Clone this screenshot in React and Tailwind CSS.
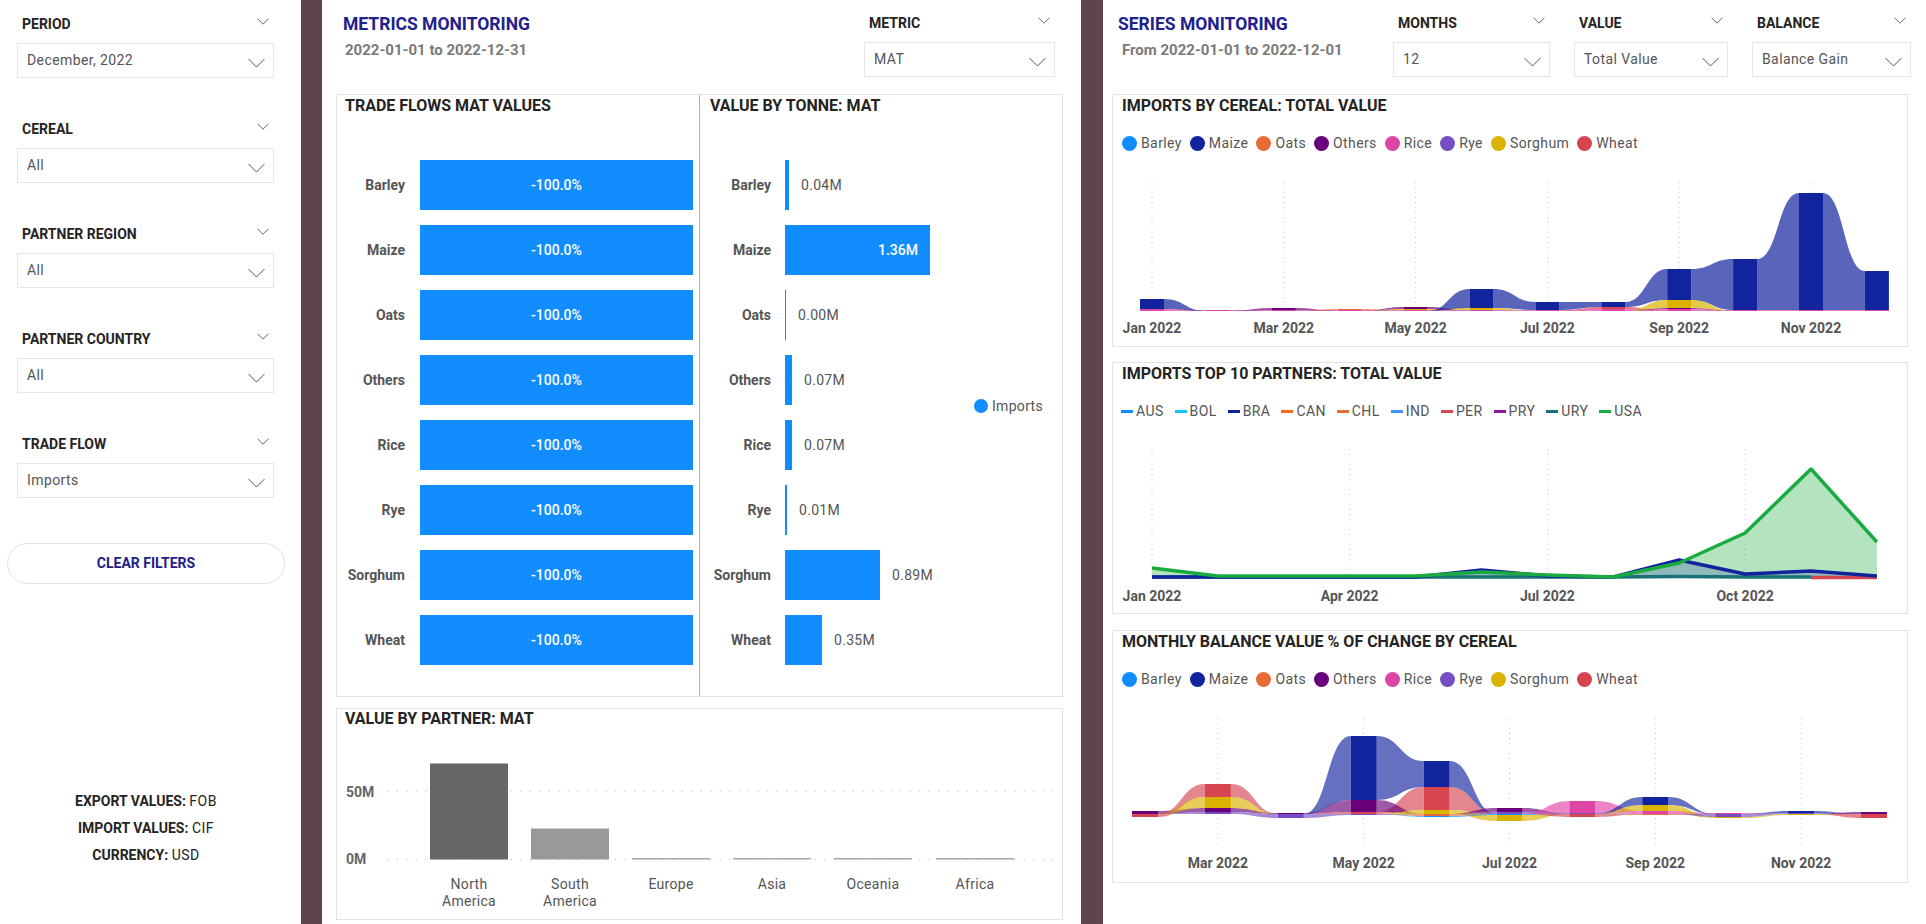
import React from 'react';

const FONT = "font-[family-name:Roboto,'Liberation_Sans',Arial,sans-serif]";

const C = {
  Barley: '#118DFF',
  Maize: '#12239E',
  Oats: '#E66C37',
  Others: '#6B007B',
  Rice: '#E044A7',
  Rye: '#744EC2',
  Sorghum: '#D9B300',
  Wheat: '#D64550',
};

const DOTS = [
  { name: 'Barley', bg: 'bg-[#118DFF]' },
  { name: 'Maize', bg: 'bg-[#12239E]' },
  { name: 'Oats', bg: 'bg-[#E66C37]' },
  { name: 'Others', bg: 'bg-[#6B007B]' },
  { name: 'Rice', bg: 'bg-[#E044A7]' },
  { name: 'Rye', bg: 'bg-[#744EC2]' },
  { name: 'Sorghum', bg: 'bg-[#D9B300]' },
  { name: 'Wheat', bg: 'bg-[#D64550]' },
];

const PARTNERS = [
  { name: 'AUS', bg: 'bg-[#118DFF]' },
  { name: 'BOL', bg: 'bg-[#15C6F4]' },
  { name: 'BRA', bg: 'bg-[#12239E]' },
  { name: 'CAN', bg: 'bg-[#F26B1D]' },
  { name: 'CHL', bg: 'bg-[#E66C37]' },
  { name: 'IND', bg: 'bg-[#4092FF]' },
  { name: 'PER', bg: 'bg-[#D64550]' },
  { name: 'PRY', bg: 'bg-[#8A1A9B]' },
  { name: 'URY', bg: 'bg-[#197278]' },
  { name: 'USA', bg: 'bg-[#1AAB40]' },
];

const HeadChevron = () => (
  <svg width="12" height="7" viewBox="0 0 12 7" className="shrink-0 mt-[4px]">
    <polyline points="0.5,0.7 6,6.2 11.5,0.7" fill="none" stroke="#666" strokeWidth="1" />
  </svg>
);

const BoxChevron = () => (
  <svg width="17" height="10" viewBox="0 0 17 10" className="shrink-0 mt-[5px]">
    <polyline points="0.5,1 8.5,9 16.5,1" fill="none" stroke="#555" strokeWidth="1" />
  </svg>
);

function Slicer({ label, value }) {
  return (
    <div className="w-full">
      <div className="flex items-start justify-between h-[20px] pl-[5px] pr-[5px]">
        <span className="text-[14px] leading-[20px] font-bold text-[#252423]">{label}</span>
        <HeadChevron />
      </div>
      <div className="mt-[9px] h-[35px] border border-[#e6e6e6] flex items-center justify-between pl-[9px] pr-[8px]">
        <span className="text-[14px] text-[#555] tracking-[0.4px]">{value}</span>
        <BoxChevron />
      </div>
    </div>
  );
}

function Sidebar() {
  return (
    <div className="w-[301px] h-full bg-white pt-[14px] pl-[17px] flex flex-col shrink-0">
      <div className="w-[257px] flex flex-col gap-[41px]">
        <Slicer label="PERIOD" value="December, 2022" />
        <Slicer label="CEREAL" value="All" />
        <Slicer label="PARTNER REGION" value="All" />
        <Slicer label="PARTNER COUNTRY" value="All" />
        <Slicer label="TRADE FLOW" value="Imports" />
      </div>
      <button className="mt-[45px] -ml-[10px] w-[278px] h-[41px] rounded-full border border-[#e2e2e2] bg-white text-[14px] font-bold text-[#1e2088]">
        CLEAR FILTERS
      </button>
      <div className="mt-[204px] -ml-[17px] w-[292px] text-center text-[14px] leading-[27px] text-[#252423]">
        <div>
          <span className="font-bold">EXPORT VALUES:</span> <span className="tracking-[0.5px]">FOB</span>
        </div>
        <div>
          <span className="font-bold">IMPORT VALUES:</span> <span className="tracking-[0.5px]">CIF</span>
        </div>
        <div>
          <span className="font-bold">CURRENCY:</span> <span className="tracking-[0.5px]">USD</span>
        </div>
      </div>
    </div>
  );
}

const CEREALS = ['Barley', 'Maize', 'Oats', 'Others', 'Rice', 'Rye', 'Sorghum', 'Wheat'];
const TONNE = [
  ['0.04M', 4],
  ['1.36M', 145],
  ['0.00M', 1],
  ['0.07M', 7],
  ['0.07M', 7],
  ['0.01M', 2],
  ['0.89M', 95],
  ['0.35M', 37],
];

function PartnerChart() {
  const bars = [
    { x: 93, h: 96, fill: '#666666', l1: 'North', l2: 'America' },
    { x: 194, h: 31, fill: '#999999', l1: 'South', l2: 'America' },
    { x: 295, h: 1.5, fill: '#aaaaaa', l1: 'Europe' },
    { x: 396, h: 1.5, fill: '#aaaaaa', l1: 'Asia' },
    { x: 497, h: 1.5, fill: '#aaaaaa', l1: 'Oceania' },
    { x: 599, h: 1.5, fill: '#aaaaaa', l1: 'Africa' },
  ];
  return (
    <svg width="725" height="190" className="block">
      <line x1="50" y1="62" x2="721" y2="62" stroke="#c6c6c6" strokeWidth="1" strokeDasharray="1.5 8" />
      <line x1="50" y1="130.5" x2="721" y2="130.5" stroke="#c6c6c6" strokeWidth="1" strokeDasharray="1.5 8" />
      <text x="9" y="64" fontSize="14" fontWeight="700" fill="#666" dominantBaseline="middle">50M</text>
      <text x="9" y="131" fontSize="14" fontWeight="700" fill="#666" dominantBaseline="middle">0M</text>
      {bars.map((b) => (
        <g key={b.l1}>
          <rect x={b.x} y={130.5 - b.h} width="78" height={b.h} fill={b.fill} />
          <text x={b.x + 39} y="156" fontSize="14" fill="#555" textAnchor="middle" dominantBaseline="middle" letterSpacing="0.3">
            {b.l1}
          </text>
          {b.l2 && (
            <text x={b.x + 39} y="173" fontSize="14" fill="#555" textAnchor="middle" dominantBaseline="middle" letterSpacing="0.3">
              {b.l2}
            </text>
          )}
        </g>
      ))}
    </svg>
  );
}

function Middle() {
  return (
    <div className="ml-[21px] w-[759px] h-full bg-white flex flex-col shrink-0">
      <div className="h-[94px] flex shrink-0">
        <div className="flex-1 pl-[21px] pt-[13px]">
          <div className="text-[17.5px] leading-[22px] font-bold text-[#21218d]">METRICS MONITORING</div>
          <div className="mt-[6px] pl-[2px] text-[15px] leading-[18px] font-bold text-[#7a7a7a]">2022-01-01 to 2022-12-31</div>
        </div>
        <div className="w-[191px] mr-[26px] pt-[13px]">
          <Slicer label="METRIC" value="MAT" />
        </div>
      </div>

      <div className="ml-[14px] w-[727px] h-[603px] border border-[#e3e3e3] flex shrink-0">
        <div className="w-[362px] flex flex-col">
          <div className="pl-[8px] text-[16px] leading-[22px] font-bold text-[#252423]">TRADE FLOWS MAT VALUES</div>
          <div className="mt-[43px] flex flex-col gap-[15px]">
            {CEREALS.map((c) => (
              <div key={c} className="flex items-center h-[50px]">
                <div className="w-[68px] text-right text-[14px] font-bold text-[#555]">{c}</div>
                <div className="ml-[15px] w-[273px] h-full bg-[#118dff] flex items-center justify-center text-white text-[14px] font-medium">
                  -100.0%
                </div>
              </div>
            ))}
          </div>
        </div>
        <div className="flex-1 border-l border-[#b3b3b3] flex flex-col">
          <div className="pl-[10px] text-[16px] leading-[22px] font-bold text-[#252423]">VALUE BY TONNE: MAT</div>
          <div className="mt-[43px] flex">
            <div className="w-[274px] flex flex-col gap-[15px]">
              {CEREALS.map((c, i) => {
                const [lbl, w] = TONNE[i];
                const inside = w > 120;
                return (
                  <div key={c} className="flex items-center h-[50px]">
                    <div className="w-[71px] text-right text-[14px] font-bold text-[#555]">{c}</div>
                    {inside ? (
                      <div
                        className="ml-[14px] h-full bg-[#118dff] flex items-center justify-end pr-[12px] text-white text-[14px] font-medium"
                        style={{ width: w }}
                      >
                        {lbl}
                      </div>
                    ) : (
                      <>
                        <div className="ml-[14px] h-full bg-[#118dff] shrink-0" style={{ width: w }} />
                        <div className="ml-[12px] text-[14px] text-[#555] tracking-[0.3px]">{lbl}</div>
                      </>
                    )}
                  </div>
                );
              })}
            </div>
            <div className="self-center mb-[13px] flex items-center gap-[4px]">
              <span className="w-[14px] h-[14px] rounded-full bg-[#118dff]" />
              <span className="text-[14px] text-[#555] tracking-[0.3px]">Imports</span>
            </div>
          </div>
        </div>
      </div>

      <div className="ml-[14px] mt-[11px] w-[727px] h-[212px] border border-[#e3e3e3] flex flex-col shrink-0">
        <div className="pl-[8px] text-[16px] leading-[20px] font-bold text-[#252423]">VALUE BY PARTNER: MAT</div>
        <PartnerChart />
      </div>
    </div>
  );
}

function Ribbon({ xs, base, bw, cols, op = 0.7 }) {
  const segs = cols.map((c) => {
    const m = {};
    let y = base;
    (c.p || []).forEach(([s, h]) => {
      m[s] = [y - h, y];
      y -= h;
    });
    y = base;
    (c.n || []).forEach(([s, h]) => {
      m[s] = [y, y + h];
      y += h;
    });
    return m;
  });
  const ribbons = [];
  for (let i = 0; i < cols.length - 1; i++) {
    const keys = new Set([...Object.keys(segs[i]), ...Object.keys(segs[i + 1])]);
    keys.forEach((s) => {
      const a = segs[i][s] || [base, base];
      const b = segs[i + 1][s] || [base, base];
      const x0 = xs[i] + bw / 2;
      const x1 = xs[i + 1] - bw / 2;
      const xm = (x0 + x1) / 2;
      ribbons.push(
        <path
          key={`r${i}${s}`}
          d={`M${x0},${a[0]} C${xm},${a[0]} ${xm},${b[0]} ${x1},${b[0]} L${x1},${b[1]} C${xm},${b[1]} ${xm},${a[1]} ${x0},${a[1]} Z`}
          fill={C[s]}
          fillOpacity={op}
        />
      );
    });
  }
  const bars = [];
  segs.forEach((m, i) =>
    Object.entries(m).forEach(([s, [t, b]]) =>
      bars.push(<rect key={`b${i}${s}`} x={xs[i] - bw / 2} y={t} width={bw} height={b - t} fill={C[s]} />)
    )
  );
  return (
    <g>
      {ribbons}
      {bars}
    </g>
  );
}

function Grid({ xs, y1, y2 }) {
  return (
    <g>
      {xs.map((x, i) => (
        <line key={i} x1={x} y1={y1} x2={x} y2={y2} stroke="#c8c8c8" strokeWidth="1" strokeDasharray="1 4" />
      ))}
    </g>
  );
}

function Labels({ items, y }) {
  return (
    <g>
      {items.map(([x, t]) => (
        <text key={t} x={x} y={y} fontSize="14" fontWeight="700" fill="#555" textAnchor="middle" dominantBaseline="middle">
          {t}
        </text>
      ))}
    </g>
  );
}

const MONTHS_A = Array.from({ length: 12 }, (_, m) => 39 + 65.9 * m);

function ChartA() {
  const xs = MONTHS_A;
  const cols = [
    { p: [['Rice', 2], ['Maize', 10]] },
    { p: [['Rice', 1]] },
    { p: [['Rice', 1], ['Others', 2]] },
    { p: [['Rice', 1], ['Oats', 1]] },
    { p: [['Rice', 1], ['Sorghum', 1], ['Others', 2]] },
    { p: [['Rice', 1], ['Sorghum', 2], ['Maize', 19]] },
    { p: [['Rice', 1], ['Maize', 8]] },
    { p: [['Rice', 2], ['Wheat', 2], ['Maize', 5]] },
    { p: [['Rice', 2], ['Others', 1], ['Sorghum', 8], ['Maize', 31]] },
    { p: [['Rice', 1], ['Maize', 51]] },
    { p: [['Rice', 1], ['Maize', 117]] },
    { p: [['Rice', 1], ['Maize', 39]] },
  ];
  const gx = [0, 2, 4, 6, 8, 10].map((i) => xs[i]);
  const names = ['Jan 2022', 'Mar 2022', 'May 2022', 'Jul 2022', 'Sep 2022', 'Nov 2022'];
  return (
    <svg width="794" height="192" className="block">
      <Grid xs={gx} y1={28} y2={157} />
      <Ribbon xs={xs} base={157} bw={24} cols={cols} op={0.7} />
      <Labels items={gx.map((x, i) => [x, names[i]])} y={175} />
    </svg>
  );
}

function ChartB() {
  const xs = MONTHS_A;
  const base = 156;
  const USA = [146, 154, 154, 154, 154, 150, 153, 155, 141, 111, 47, 120];
  const BRA = [155, 155, 155, 155, 155, 148, 154, 155, 138, 152, 149, 154];
  const URY = [155, 155, 155, 155, 155, 155, 155, 155, 154.5, 155, 155];
  const pts = (arr) => arr.map((y, i) => `${xs[i]},${y}`).join(' ');
  const area = (arr) => `${xs[0]},${base} ${pts(arr)} ${xs[arr.length - 1]},${base}`;
  const gx = [0, 3, 6, 9].map((i) => xs[i]);
  const names = ['Jan 2022', 'Apr 2022', 'Jul 2022', 'Oct 2022'];
  return (
    <svg width="794" height="191" className="block">
      <Grid xs={gx} y1={27} y2={156} />
      <polygon points={area(USA)} fill="#1AAB40" fillOpacity="0.33" />
      <polygon points={area(BRA)} fill="#12239E" fillOpacity="0.22" />
      <polyline points={pts(URY)} fill="none" stroke="#197278" strokeWidth="3.5" />
      <polyline points={`${xs[10]},155.5 ${xs[11]},155.5`} fill="none" stroke="#D64550" strokeWidth="3.5" />
      <polyline points={pts(BRA)} fill="none" stroke="#12239E" strokeWidth="3.5" strokeLinejoin="round" />
      <polyline points={pts(USA)} fill="none" stroke="#1AAB40" strokeWidth="3.5" strokeLinejoin="round" />
      <Labels items={gx.map((x, i) => [x, names[i]])} y={175} />
    </svg>
  );
}

function ChartC() {
  const xs = Array.from({ length: 11 }, (_, i) => 32 + 72.9 * i);
  const cols = [
    { p: [['Others', 3]], n: [['Wheat', 3]] },
    { p: [['Rye', 2], ['Others', 4], ['Sorghum', 11], ['Wheat', 13]] },
    { p: [['Others', 1]], n: [['Rye', 4]] },
    { p: [['Wheat', 2], ['Others', 12], ['Maize', 64]], n: [['Rye', 1]] },
    { p: [['Sorghum', 4], ['Wheat', 23], ['Maize', 26]], n: [['Oats', 2], ['Barley', 1]] },
    { p: [['Rye', 2], ['Others', 4]], n: [['Barley', 1], ['Sorghum', 6]] },
    { p: [['Rye', 1], ['Rice', 12]], n: [['Wheat', 3]] },
    { p: [['Rice', 3], ['Sorghum', 6], ['Maize', 8]], n: [['Oats', 1]] },
    { p: [['Rice', 1]], n: [['Rye', 3], ['Sorghum', 1]] },
    { p: [['Rye', 1], ['Maize', 2]], n: [['Sorghum', 1]] },
    { p: [['Others', 2]], n: [['Wheat', 4]] },
  ];
  const gx = [1, 3, 5, 7, 9].map((i) => xs[i]);
  const names = ['Mar 2022', 'May 2022', 'Jul 2022', 'Sep 2022', 'Nov 2022'];
  return (
    <svg width="794" height="192" className="block">
      <Grid xs={gx} y1={28} y2={158} />
      <Ribbon xs={xs} base={124} bw={26} cols={cols} op={0.65} />
      <Labels items={gx.map((x, i) => [x, names[i]])} y={174} />
    </svg>
  );
}

function DotLegend() {
  return (
    <div className="mt-[15px] h-[22px] pl-[9px] flex items-center gap-[8px]">
      {DOTS.map((d) => (
        <div key={d.name} className="flex items-center gap-[4px]">
          <span className={`w-[15px] h-[15px] rounded-full ${d.bg}`} />
          <span className="text-[14px] text-[#555] tracking-[0.4px]">{d.name}</span>
        </div>
      ))}
    </div>
  );
}

function LineLegend() {
  return (
    <div className="mt-[15px] h-[22px] pl-[8px] flex items-center gap-[11px]">
      {PARTNERS.map((d) => (
        <div key={d.name} className="flex items-center gap-[3px]">
          <span className={`w-[12px] h-[3px] ${d.bg}`} />
          <span className="text-[14px] text-[#555] tracking-[0.4px]">{d.name}</span>
        </div>
      ))}
    </div>
  );
}

function CardTitle({ children }) {
  return <div className="pl-[9px] text-[16px] leading-[22px] font-bold text-[#252423]">{children}</div>;
}

function Right() {
  return (
    <div className="ml-[22px] w-[823px] h-full bg-white flex flex-col shrink-0">
      <div className="h-[94px] flex shrink-0">
        <div className="w-[290px] pl-[15px] pt-[13px]">
          <div className="text-[17.5px] leading-[22px] font-bold text-[#21218d]">SERIES MONITORING</div>
          <div className="mt-[6px] pl-[4px] text-[15px] leading-[18px] font-bold text-[#7a7a7a]">From 2022-01-01 to 2022-12-01</div>
        </div>
        <div className="pt-[13px] flex gap-[24px]">
          <div className="w-[157px]">
            <Slicer label="MONTHS" value="12" />
          </div>
          <div className="w-[154px]">
            <Slicer label="VALUE" value="Total Value" />
          </div>
          <div className="w-[159px]">
            <Slicer label="BALANCE" value="Balance Gain" />
          </div>
        </div>
      </div>

      <div className="ml-[9px] w-[796px] h-[253px] border border-[#e3e3e3] flex flex-col shrink-0">
        <CardTitle>IMPORTS BY CEREAL: TOTAL VALUE</CardTitle>
        <DotLegend />
        <ChartA />
      </div>

      <div className="ml-[9px] mt-[15px] w-[796px] h-[252px] border border-[#e3e3e3] flex flex-col shrink-0">
        <CardTitle>IMPORTS TOP 10 PARTNERS: TOTAL VALUE</CardTitle>
        <LineLegend />
        <ChartB />
      </div>

      <div className="ml-[9px] mt-[16px] w-[796px] h-[253px] border border-[#e3e3e3] flex flex-col shrink-0">
        <CardTitle>MONTHLY BALANCE VALUE % OF CHANGE BY CEREAL</CardTitle>
        <DotLegend />
        <ChartC />
      </div>
    </div>
  );
}

export default function App() {
  return (
    <div className={`flex w-[1926px] h-[924px] bg-[#5d444e] overflow-hidden ${FONT}`}>
      <Sidebar />
      <Middle />
      <Right />
    </div>
  );
}
